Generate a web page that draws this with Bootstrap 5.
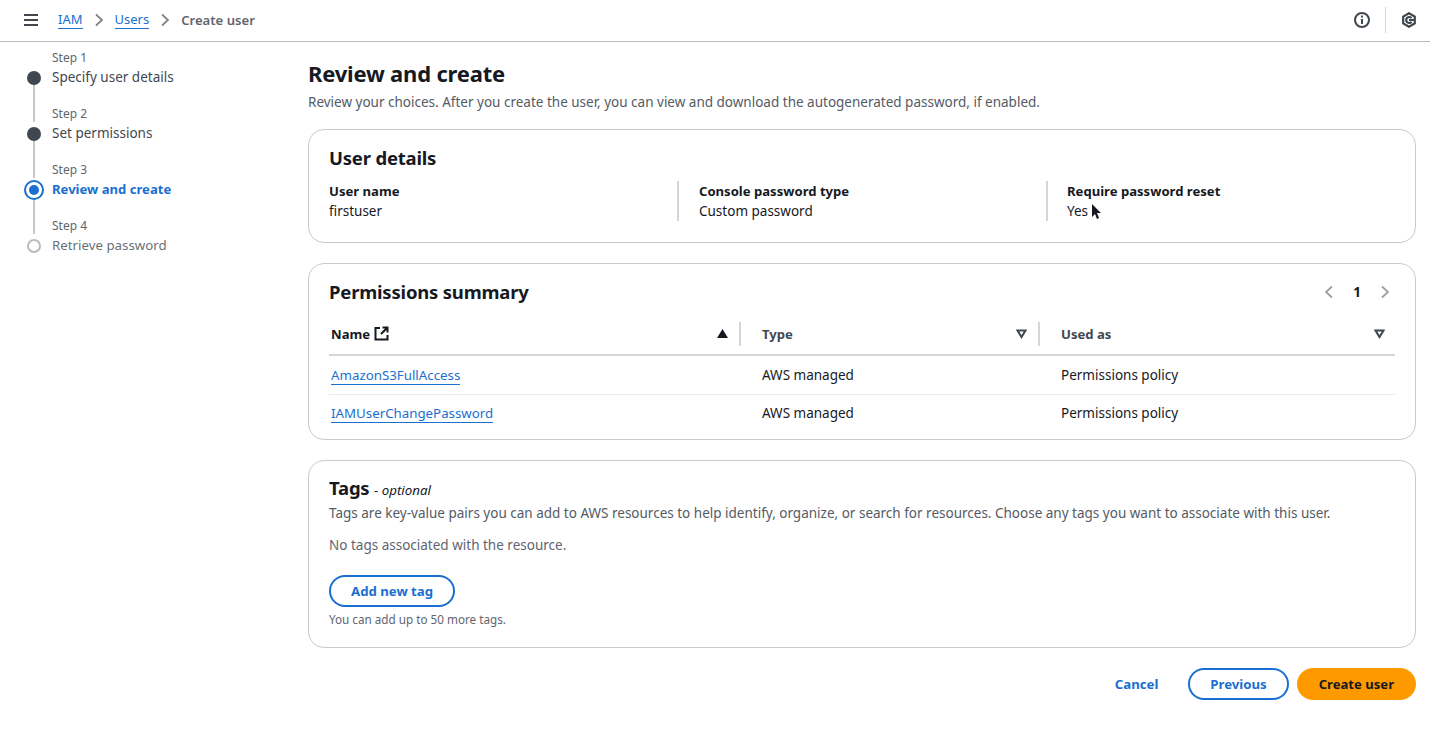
<!DOCTYPE html>
<html lang="en">

<head>
    <meta charset="UTF-8">
    <meta name="viewport" content="width=device-width, initial-scale=1.0">
    <title>Create user</title>
    <link href="https://cdn.jsdelivr.net/npm/bootstrap@5.3.0/dist/css/bootstrap.min.css" rel="stylesheet">
    <style>
        body {
            font-family: "Noto Sans", "Open Sans", sans-serif;
            font-size: 13.5px;
            line-height: 20px;
            color: #3f4450;
            background: #fff;
            height: 736px;
            overflow: hidden;
        }
        a { color: #1a6fd0; text-decoration: none; }

        .top-strip {
            height: 42px;
            border-bottom: 1px solid #b9bcc2;
            padding-left: 23px;
            padding-right: 13px;
            padding-bottom: 2px;
        }
        .crumb-nav { margin-left: 19px; }
        .crumb-link { border-bottom: 1px solid #1a6fd0; line-height: 17px; font-size: 13px; }
        .crumb-now { color: #5f6570; font-weight: 600; font-size: 13.1px; }
        .crumb-sep { margin: 0 11px; }
        .top-divider { width: 1px; height: 26px; background: #d3d5d9; margin: 0 15px 0 15px; }

        .page-body { padding-right: 14px; }

        .steps { width: 308px; flex: none; padding: 6px 0 0 24px; }
        .step-item { display: flex; height: 56px; position: relative; }
        .step-mark { width: 20px; height: 38px; margin-right: 8px; flex: none; display: flex; align-items: flex-end; justify-content: center; padding-bottom: 1px; }
        .step-line { position: absolute; left: 9px; top: 36px; width: 2px; height: 38px; background: #c6c8cc; }
        .dot-done { width: 14px; height: 14px; border-radius: 50%; background: #414750; position: relative; z-index: 1; }
        .dot-now { width: 20px; height: 20px; border-radius: 50%; border: 2px solid #1a6fd0; background: #fff; position: relative; z-index: 1; margin-bottom: -3px; display: flex; align-items: center; justify-content: center; }
        .dot-now i { display: block; width: 10px; height: 10px; border-radius: 50%; background: #1a6fd0; }
        .dot-next { width: 14px; height: 14px; border-radius: 50%; border: 2px solid #b8bbc0; background: #fff; position: relative; z-index: 1; }
        .step-small { font-size: 12px; color: #5f6570; line-height: 19px; padding-top: 0; }
        .step-name { font-size: 13.5px; color: #414750; line-height: 20px; }
        .step-name.active-step { color: #1a6fd0; font-weight: 700; font-size: 13.1px; }
        .step-name.todo-step { color: #6b7079; font-size: 13.3px; }

        .main-col { flex: 1; padding-top: 16px; min-width: 0; }
        .page-title { font-size: 22px; line-height: 30px; font-weight: 700; color: #16191f; margin: 0 0 4px; letter-spacing: -.2px; }
        .page-sub { color: #545b64; margin-bottom: 17px; }

        .panel-box { border: 1px solid #c9cbd0; border-radius: 16px; background: #fff; padding: 0 20px; margin-bottom: 20px; }
        .panel-head { font-size: 18.5px; line-height: 26px; font-weight: 700; color: #16191f; margin: 0; letter-spacing: -.2px; }

        .details-box { height: 114px; padding-top: 15px; }
        .details-row { margin-top: 10px; }
        .detail-one { width: 348px; }
        .detail-two { width: 369px; border-left: 2px solid #d3d5d9; padding-left: 20px; }
        .detail-three { flex: 1; border-left: 2px solid #d3d5d9; padding-left: 19px; }
        .detail-label { font-weight: 700; color: #16191f; font-size: 13.1px; }
        .detail-value { color: #16191f; }

        .perm-box { height: 177px; padding-top: 15px; }
        .pager { color: #16191f; font-weight: 700; font-size: 13.5px; gap: 19px; margin-right: 5px; }
        .perm-table { margin: 8px 0 0; width: 1066px; table-layout: fixed; color: #16191f; }
        .perm-table th { font-weight: 700; font-size: 13.1px; color: #414750; height: 42px; padding: 0 2px; border-bottom: 2px solid #d3d5d9; vertical-align: middle; }
        .perm-table td { height: 39px; padding: 0 2px; color: #16191f; border-bottom: 1px solid #e9ebed; vertical-align: middle; }
        .perm-table tr:last-child td { border-bottom: 0; padding-bottom: 2px; }
        .perm-table a { border-bottom: 1px solid #1a6fd0; line-height: 17px; display: inline-block; font-size: 13.3px; }
        .th-inner { display: flex; align-items: center; justify-content: space-between; height: 24px; }
        .th-rule { border-right: 2px solid #d3d5d9; padding-right: 11px; }
        .perm-table .th-left { padding-left: 19px; }
        .th-dark { color: #16191f !important; }

        .tags-box { height: 188px; padding-top: 14px; }
        .tags-head { line-height: 25px; }
        .tags-sub { font-size: 13.3px; font-style: italic; font-weight: 400; color: #16191f; letter-spacing: 0; }
        .tags-copy { color: #545b64; }
        .tags-empty { color: #5f6570; margin-top: 12px; margin-bottom: 20px; }
        .tags-hint { font-size: 11.700px; color: #5f6570; margin-top: 3px; line-height: 18px; }

        .btn-line { border: 2px solid #1a6fd0; color: #1a6fd0; background: #fff; border-radius: 16px; font-weight: 700; font-size: 13.2px; line-height: 20px; padding: 4px 20px; }
        .btn-plain { color: #1a6fd0; font-weight: 700; font-size: 13.2px; line-height: 20px; padding: 4px 20px; border: 2px solid transparent; background: none; }
        .btn-create { border: 2px solid #ff9900; background: #ff9900; color: #16191f; border-radius: 16px; font-weight: 700; font-size: 13.1px; line-height: 20px; padding: 4px 20px; }
        .action-row { gap: 8px; }

        .mouse-arrow { position: absolute; left: 1091px; top: 204px; }
    </style>
</head>

<body>
    <div class="top-strip d-flex align-items-center">
        <svg width="16" height="14" viewBox="0 0 16 14" fill="none" stroke="#414750" stroke-width="2"><path d="M1 2h14M1 7h14M1 12h14"/></svg>
        <nav class="crumb-nav d-flex align-items-center">
            <a href="#" class="crumb-link">IAM</a>
            <svg class="crumb-sep" width="10" height="14" viewBox="0 0 10 14" fill="none" stroke="#7d8289" stroke-width="1.7"><path d="M2 1.500l6 5.500-6 5.500"/></svg>
            <a href="#" class="crumb-link">Users</a>
            <svg class="crumb-sep" width="10" height="14" viewBox="0 0 10 14" fill="none" stroke="#7d8289" stroke-width="1.7"><path d="M2 1.500l6 5.500-6 5.500"/></svg>
            <span class="crumb-now">Create user</span>
        </nav>
        <div class="ms-auto d-flex align-items-center">
            <svg width="16" height="16" viewBox="0 0 16 16" fill="none" stroke="#414750" stroke-width="2"><circle cx="8" cy="8" r="7"/><path d="M8 7v5M8 3.600v2"/></svg>
            <div class="top-divider"></div>
            <svg width="16" height="16" viewBox="0 0 16 16" fill="none" stroke="#414750" stroke-width="2.200"><path d="M8 1.200l5.800 3.400v6.800L8 14.800l-5.800-3.400V4.600z"/><path d="M10.600 6.200A3 3 0 1 0 10.600 9.800M8 8h6"/></svg>
        </div>
    </div>

    <div class="page-body d-flex">
        <div class="steps">
            <div class="step-item">
                <div class="step-mark"><span class="dot-done"></span></div>
                <span class="step-line"></span>
                <div><div class="step-small">Step 1</div><div class="step-name">Specify user details</div></div>
            </div>
            <div class="step-item">
                <div class="step-mark"><span class="dot-done"></span></div>
                <span class="step-line"></span>
                <div><div class="step-small">Step 2</div><div class="step-name">Set permissions</div></div>
            </div>
            <div class="step-item">
                <div class="step-mark"><span class="dot-now"><i></i></span></div>
                <span class="step-line"></span>
                <div><div class="step-small">Step 3</div><div class="step-name active-step">Review and create</div></div>
            </div>
            <div class="step-item">
                <div class="step-mark"><span class="dot-next"></span></div>
                <div><div class="step-small">Step 4</div><div class="step-name todo-step">Retrieve password</div></div>
            </div>
        </div>

        <div class="main-col">
            <h1 class="page-title">Review and create</h1>
            <p class="page-sub">Review your choices. After you create the user, you can view and download the autogenerated password, if enabled.</p>

            <section class="panel-box details-box">
                <h2 class="panel-head">User details</h2>
                <div class="details-row d-flex">
                    <div class="detail-one"><div class="detail-label">User name</div><div class="detail-value">firstuser</div></div>
                    <div class="detail-two"><div class="detail-label">Console password type</div><div class="detail-value">Custom password</div></div>
                    <div class="detail-three"><div class="detail-label">Require password reset</div><div class="detail-value">Yes</div></div>
                </div>
            </section>

            <section class="panel-box perm-box">
                <div class="d-flex align-items-center justify-content-between">
                    <h2 class="panel-head">Permissions summary</h2>
                    <div class="pager d-flex align-items-center">
                        <svg width="10" height="14" viewBox="0 0 10 14" fill="none" stroke="#9a9da3" stroke-width="1.700"><path d="M8 1.500L2 7l6 5.500"/></svg>
                        <span>1</span>
                        <svg width="10" height="14" viewBox="0 0 10 14" fill="none" stroke="#9a9da3" stroke-width="1.700"><path d="M2 1.500L8 7l-6 5.500"/></svg>
                    </div>
                </div>
                <table class="table table-borderless perm-table">
                    <colgroup><col style="width:414px"><col style="width:299px"><col></colgroup>
                    <thead>
                        <tr>
                            <th><div class="th-inner th-rule"><span class="th-dark d-inline-flex align-items-center gap-1">Name
                                <svg width="15" height="15" viewBox="0 0 15 15" fill="none" stroke="#16191f" stroke-width="2"><path d="M6 2H1.500v11.500h12V9M8.500 1.500h5v5M13 2L7 8"/></svg></span>
                                <svg width="11" height="9" viewBox="0 0 11 9"><path d="M5.500 0l5.500 9H0z" fill="#16191f"/></svg></div></th>
                            <th class="th-left"><div class="th-inner th-rule"><span>Type</span>
                                <svg width="11" height="10" viewBox="0 0 11 10" fill="none" stroke="#414750" stroke-width="2"><path d="M1.500 1.500h8L5.500 8z"/></svg></div></th>
                            <th class="th-left"><div class="th-inner"><span>Used as</span>
                                <svg class="me-2" width="11" height="10" viewBox="0 0 11 10" fill="none" stroke="#414750" stroke-width="2"><path d="M1.500 1.500h8L5.500 8z"/></svg></div></th>
                        </tr>
                    </thead>
                    <tbody>
                        <tr><td><a href="#">AmazonS3FullAccess</a></td><td class="th-left">AWS managed</td><td class="th-left">Permissions policy</td></tr>
                        <tr><td><a href="#">IAMUserChangePassword</a></td><td class="th-left">AWS managed</td><td class="th-left">Permissions policy</td></tr>
                    </tbody>
                </table>
            </section>

            <section class="panel-box tags-box">
                <h2 class="panel-head tags-head">Tags <span class="tags-sub">- optional</span></h2>
                <div class="tags-copy">Tags are key-value pairs you can add to AWS resources to help identify, organize, or search for resources. Choose any tags you want to associate with this user.</div>
                <div class="tags-empty">No tags associated with the resource.</div>
                <button type="button" class="btn btn-line">Add new tag</button>
                <div class="tags-hint">You can add up to 50 more tags.</div>
            </section>

            <div class="action-row d-flex justify-content-end align-items-center">
                <button type="button" class="btn btn-plain">Cancel</button>
                <button type="button" class="btn btn-line">Previous</button>
                <button type="button" class="btn btn-create">Create user</button>
            </div>
        </div>
    </div>

    <svg class="mouse-arrow" width="11" height="17" viewBox="0 0 11 17"><path d="M1 0v13l3-3 2 5 2-1-2-5h4z" fill="#16191f"/></svg>
</body>

</html>
